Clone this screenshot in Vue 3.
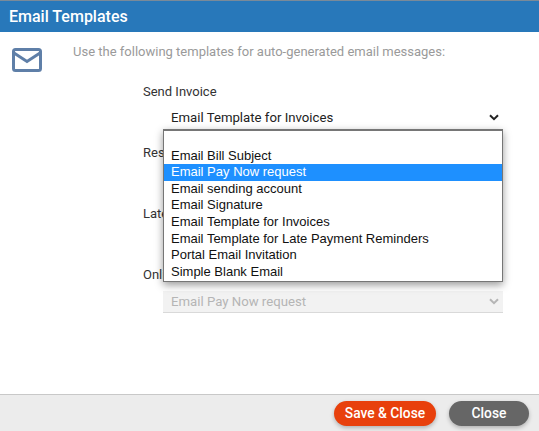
<script setup>
const options = ['', 'Email Bill Subject', 'Email Pay Now request', 'Email sending account', 'Email Signature', 'Email Template for Invoices', 'Email Template for Late Payment Reminders', 'Portal Email Invitation', 'Simple Blank Email']
const rows = [
  { label: 'Send Invoice', value: 'Email Template for Invoices' },
  { label: 'Resend Invoice', value: 'Email Template for Invoices' },
  { label: 'Late Payment Reminder', value: 'Email Template for Late Payment Reminders' },
  { label: 'Online Payment', value: 'Email Pay Now request', disabled: true },
]
</script>

<template>
  <div class="dialog">
    <header class="head">Email Templates</header>
    <main class="body">
      <div class="icon-col">
        <svg width="30" height="24" viewBox="0 0 30 24" class="mail">
          <rect x="1.5" y="1.5" width="27" height="21" rx="2" fill="none" stroke="#5f7fa8" stroke-width="3" />
          <path d="M2 5 L15 13.5 L28 5" fill="none" stroke="#5f7fa8" stroke-width="3" />
        </svg>
      </div>
      <div class="main-col">
        <p class="intro">Use the following templates for auto-generated email messages:</p>
        <div class="form">
          <div v-for="(r, i) in rows" :key="r.label" class="row" :class="{ disabled: r.disabled }">
            <div class="label">{{ r.label }}</div>
            <div class="select">
              <span>{{ r.value }}</span>
              <svg width="10" height="7" viewBox="0 0 10 7" class="chev">
                <path d="M1 1.2 L5 5.2 L9 1.2" fill="none" stroke="currentColor" stroke-width="2" />
              </svg>
            </div>
            <ul v-if="i === 0" class="popup">
              <li v-for="o in options" :key="o" :class="{ sel: o === 'Email Pay Now request' }">{{ o }}</li>
            </ul>
          </div>
        </div>
      </div>
    </main>
    <footer class="foot">
      <button class="btn save">Save &amp; Close</button>
      <button class="btn close">Close</button>
    </footer>
  </div>
</template>

<style>
html, body { margin: 0; background: #fff; }
</style>

<style scoped>
.dialog {
  width: 539px;
  height: 431px;
  display: flex;
  flex-direction: column;
  font-family: Roboto, sans-serif;
  overflow: hidden;
  background: #fff;
}
.head {
  height: 31px;
  line-height: 31px;
  border-top: 1px solid #7a8a99;
  background: #2878ba;
  color: #fff;
  font-size: 16px;
  font-weight: 500;
  padding-left: 9px;
  flex: none;
}
.body {
  flex: 1;
  display: flex;
  min-height: 0;
}
.icon-col {
  width: 73px;
  flex: none;
  padding: 16px 0 0 12px;
  box-sizing: border-box;
}
.mail { display: block; }
.main-col { flex: 1; min-width: 0; }
.intro {
  margin: 10px 0 0;
  font-size: 13px;
  line-height: 20px;
  color: #9a9a9a;
}
.form {
  margin-top: 22px;
  padding-left: 70px;
  display: flex;
  flex-direction: column;
  gap: 17px;
}
.row { position: relative; }
.label {
  font-size: 13px;
  line-height: 16px;
  color: #333;
}
.select {
  margin: 6px 0 0 20px;
  width: 340px;
  height: 22px;
  box-sizing: border-box;
  padding: 0 4px 0 8px;
  display: flex;
  align-items: center;
  justify-content: space-between;
  font-size: 13.2px;
  color: #222;
  background: #fff;
}
.disabled .select {
  margin-top: 8px;
  background: #f2f2f2;
  border-bottom: 1px solid #d9d9d9;
  color: #b5b5b5;
}
.popup {
  position: absolute;
  z-index: 2;
  left: 20px;
  top: 45px;
  width: 340px;
  box-sizing: border-box;
  margin: 0;
  padding: 0 0 1px;
  list-style: none;
  background: #fff;
  border: 1px solid #767676;
  border-top-width: 2px;
  box-shadow: 0 3px 8px rgba(0, 0, 0, 0.4);
  font-family: "Liberation Sans", sans-serif;
  font-size: 13px;
  color: #111;
}
.popup li {
  height: 16.6px;
  line-height: 16.6px;
  padding-left: 7px;
}
.popup li.sel {
  background: #1e90ff;
  color: #fff;
}
.foot {
  height: 37px;
  flex: none;
  box-sizing: border-box;
  border-top: 1px solid #c8c8c8;
  background: #ececec;
  display: flex;
  justify-content: flex-end;
  align-items: center;
  gap: 13px;
  padding: 0 10px 0 0;
}
.btn {
  height: 25px;
  border: 0;
  border-radius: 13px;
  color: #fff;
  font-family: Roboto, sans-serif;
  font-size: 13.8px;
  font-weight: 500;
  padding: 0;
  box-shadow: 0 2px 4px rgba(0, 0, 0, 0.25);
}
.save { width: 102px; background: #e8400c; }
.close { width: 80px; background: #666; }
</style>
